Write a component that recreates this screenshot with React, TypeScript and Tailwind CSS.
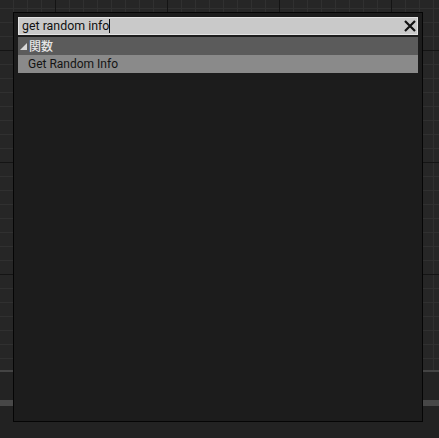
// Blueprint-style graph canvas with the context search popup on top
export default function App() {
  return (
    <div className="relative h-[438px] w-[439px] overflow-hidden bg-[#222222] font-['Roboto','Liberation_Sans',sans-serif]">
      <div className="flex h-full flex-col">
        <div className="h-[370px] bg-[#262626] [background-image:linear-gradient(to_right,#141414_1px,transparent_1px),linear-gradient(to_bottom,#141414_1px,transparent_1px),linear-gradient(to_right,#303030_1px,transparent_1px),linear-gradient(to_bottom,#303030_1px,transparent_1px)] [background-size:112px_112px,112px_112px,14px_14px,14px_14px] [background-position:55px_50px,55px_50px,13px_8px,13px_8px]" />
        <div className="h-[2px] bg-[#444444]" />
        <div className="h-[28px] bg-[#232323]" />
        <div className="h-[6px] bg-[#474747]" />
        <div className="flex-1 bg-[#222222]" />
      </div>

      <div className="absolute left-[13px] top-[12px] flex h-[410px] w-[410px] flex-col border border-[#050505] bg-[#1c1c1c] p-[4px]">
        <div className="flex h-[18px] items-center border border-[#e2e2e2] bg-[#c9c9c9] pl-[3px] pr-[1px]">
          <span className="text-[12.4px] leading-none text-[#111111]">get random info</span>
          <span className="h-[14px] w-px bg-[#111111]" />
          <svg width="12" height="12" viewBox="0 0 12 12" className="ml-auto">
            <path d="M1 1L11 11M11 1L1 11" stroke="#111111" strokeWidth="2.2" />
          </svg>
        </div>
        <div className="mt-[2px] flex h-[18px] items-center bg-[#5b5b5b] pl-[2px]">
          <svg width="7" height="7" viewBox="0 0 7 7" className="mr-[2px]">
            <polygon points="7,0 7,7 0,7" fill="#d8d8d8" />
          </svg>
          <span className="text-[12px] font-medium leading-none text-[#e6e6e6] font-['Noto_Sans_CJK_JP',sans-serif]">関数</span>
        </div>
        <div className="flex h-[18px] items-center bg-[#8a8a8a] pl-[10px]">
          <span className="text-[12px] leading-none text-[#141414]">Get Random Info</span>
        </div>
      </div>
    </div>
  );
}
